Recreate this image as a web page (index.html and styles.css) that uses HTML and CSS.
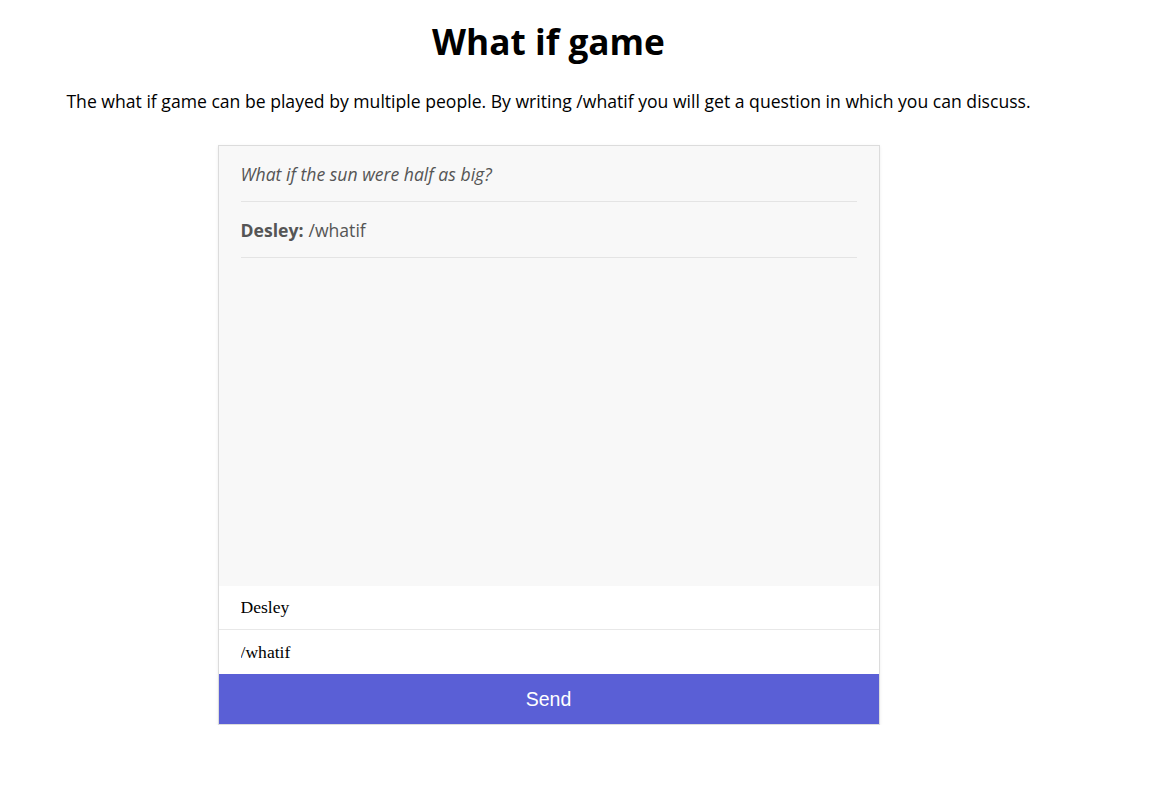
FILE: index.html
```html
<!DOCTYPE html>
<html>
<head>
<meta charset="utf-8">
<title>What if game</title>
<link rel="stylesheet" href="styles.css">
</head>
<body>
<main class="page">
  <h1 class="title">What if game</h1>
  <p class="intro">The what if game can be played by multiple people. By writing /whatif you will get a question in which you can discuss.</p>
  <div class="chat">
    <ul class="messages">
      <li class="message question">What if the sun were half as big?</li>
      <li class="message"><strong>Desley:</strong> /whatif</li>
    </ul>
    <form class="composer">
      <input class="field" type="text" value="Desley">
      <input class="field" type="text" value="/whatif">
      <button class="send" type="button">Send</button>
    </form>
  </div>
</main>
</body>
</html>
```
FILE: styles.css
```css
html, body {
  margin: 0;
  padding: 0;
  background: #fff;
}
body {
  font-family: "Open Sans", sans-serif;
  color: #000;
}
.page {
  width: 1097px;
  text-align: center;
  padding-top: 1px;
}
.title {
  font-size: 35.2px;
  font-weight: 700;
  margin: 17px 0 0;
  line-height: 46px;
}
.intro {
  font-size: 17.6px;
  line-height: 26px;
  margin: 24px 0 31px;
}
.chat {
  width: 660px;
  margin: 0 auto;
  border: 1px solid #dcdcdc;
  box-shadow: 0 1px 3px rgba(0,0,0,0.08);
  text-align: left;
  display: flex;
  flex-direction: column;
}
.messages {
  list-style: none;
  margin: 0;
  padding: 0 22px;
  height: 440px;
  background: #f8f8f8;
}
.message {
  height: 55px;
  border-bottom: 1px solid #e4e4e4;
  display: flex;
  align-items: center;
  font-size: 17.6px;
  color: #555;
  gap: 5px;
}
.message strong {
  font-weight: 700;
}
.question {
  font-style: italic;
}
.composer {
  display: flex;
  flex-direction: column;
  margin: 0;
}
.field {
  height: 44px;
  border: none;
  border-bottom: 1px solid #e8e8e8;
  padding: 0 22px;
  font-family: "Liberation Serif", serif;
  font-size: 17.6px;
  color: #000;
  background: #fff;
  outline: none;
  box-sizing: border-box;
}
.field:last-of-type {
  border-bottom: none;
}
.send {
  height: 50px;
  border: none;
  background: #5a5fd6;
  color: #fff;
  font-family: "Liberation Sans", Arial, sans-serif;
  font-size: 19.5px;
  cursor: pointer;
}
```
